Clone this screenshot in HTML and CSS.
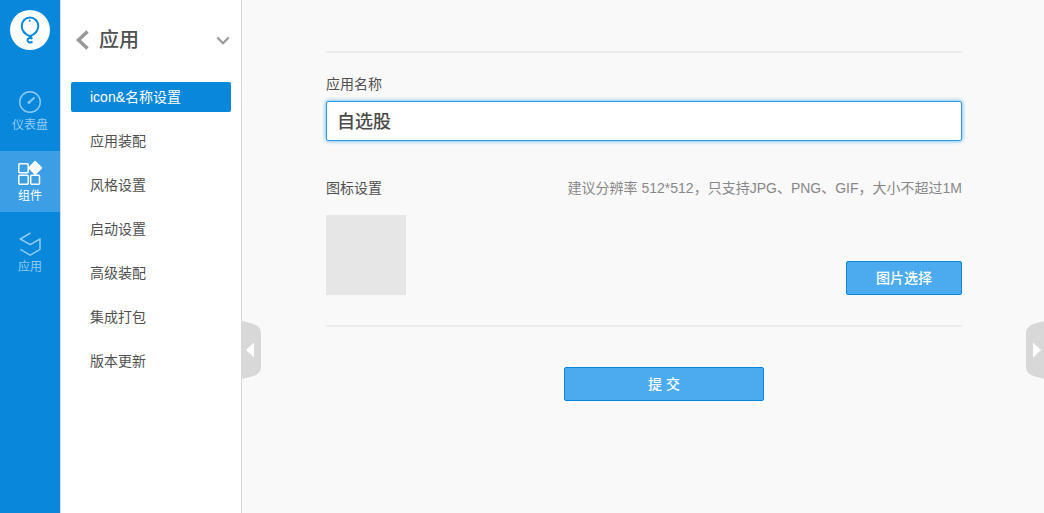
FILE: index.html
```html
<!DOCTYPE html>
<html lang="zh-CN">
<head>
<meta charset="utf-8">
<meta name="viewport" content="width=device-width, initial-scale=1">
<title>应用</title>
<link rel="stylesheet" href="styles.css">
</head>
<body>
<div class="app">
  <nav class="rail">
    <a class="logo" href="#" aria-label="首页">
      <svg width="40" height="40" viewBox="0 0 40 40" fill="none" stroke="#0988db" stroke-width="2" stroke-linecap="round">
        <path d="M20 26.3C15.500 24.500 11.700 20.600 11.700 15.800a8.300 8.300 0 0 1 16.600 0C28.300 20.600 24.500 24.500 20 26.300z"/>
        <path d="M20 26.300l1.600 1.500"/>
        <path d="M21.500 28.500c-1.600-1-4-.3-4 1.800s2.300 2.700 4.300 1.700"/>
        <circle cx="19.700" cy="10.700" r="1" fill="#0988db" stroke="none"/>
      </svg>
    </a>
    <div class="rail-items">
      <a class="rail-item" href="#">
        <svg width="28" height="28" viewBox="0 0 28 28" fill="none" stroke="currentColor">
          <circle cx="14" cy="14" r="10.300" stroke-width="1.400"/>
          <path d="M18 10l-5 4.400" stroke-width="2" stroke-linecap="round"/>
          <circle cx="13" cy="14.500" r="1.400" fill="currentColor" stroke="none"/>
        </svg>
        <span>仪表盘</span>
      </a>
      <a class="rail-item active" href="#" aria-current="page">
        <svg width="28" height="28" viewBox="0 0 28 28" fill="none" stroke="currentColor" stroke-width="1.500">
          <rect x="2.800" y="4.800" width="9.400" height="9" rx="1"/>
          <rect x="2.800" y="16.300" width="9.400" height="9" rx="1"/>
          <rect x="14.700" y="16.300" width="8.800" height="9" rx="1"/>
          <path d="M19.200 2.600l6.200 6.300-6.200 6.200L13 8.900z" fill="currentColor" stroke-linejoin="round"/>
        </svg>
        <span>组件</span>
      </a>
      <a class="rail-item" href="#">
        <svg width="28" height="28" viewBox="0 0 28 28" fill="none" stroke="currentColor" stroke-width="1.500" stroke-linejoin="round">
          <path d="M14.500 3L4.300 9l9.900 5.700L24 9v10.300l-9.800 5.900L4.300 19.300"/>
        </svg>
        <span>应用</span>
      </a>
    </div>
  </nav>

  <aside class="sidebar">
    <header class="sidebar-head">
      <button class="icon-button" type="button" aria-label="返回">
        <svg width="14" height="20" viewBox="0 0 14 20" fill="none" stroke="#999" stroke-width="3.500"><path d="M12.500 1.500L3.500 10l9 8.500"/></svg>
      </button>
      <h1 class="title">应用</h1>
      <button class="icon-button" type="button" aria-label="展开">
        <svg width="14" height="10" viewBox="0 0 14 10" fill="none" stroke="#999" stroke-width="2.200"><path d="M1.300 2.500L7 8.200l5.700-5.700"/></svg>
      </button>
    </header>
    <nav class="menu">
      <a class="menu-item active" href="#">icon&amp;名称设置</a>
      <a class="menu-item" href="#">应用装配</a>
      <a class="menu-item" href="#">风格设置</a>
      <a class="menu-item" href="#">启动设置</a>
      <a class="menu-item" href="#">高级装配</a>
      <a class="menu-item" href="#">集成打包</a>
      <a class="menu-item" href="#">版本更新</a>
    </nav>
  </aside>

  <main class="main">
    <form class="form">
      <div class="panel">
        <label class="label" for="app-name">应用名称</label>
        <input class="text-input" id="app-name" type="text" value="自选股">
        <div class="row">
          <span class="label">图标设置</span>
          <span class="hint">建议分辨率 512*512，只支持JPG、PNG、GIF，大小不超过1M</span>
        </div>
        <div class="row row-end">
          <div class="preview"></div>
          <button class="button" type="button">图片选择</button>
        </div>
      </div>
      <button class="button submit" type="submit">提 交</button>
    </form>
    <button class="handle handle-left" type="button" aria-label="收起左侧">
      <svg width="19" height="58" viewBox="0 0 19 58"><path d="M0 0l10 2.500Q19 5 19 12v34q0 7-9 9.500L0 58z" fill="#d8d8d8"/><path d="M12 21.500v15L4 29z" fill="#fff"/></svg>
    </button>
    <button class="handle handle-right" type="button" aria-label="展开右侧">
      <svg width="18" height="58" viewBox="0 0 18 58"><path d="M18 0L9 2.500Q0 5 0 12v34q0 7 9 9.500l9 2.500z" fill="#d8d8d8"/><path d="M7 21.500v15l8-7.500z" fill="#fff"/></svg>
    </button>
  </main>
</div>
</body>
</html>
```
FILE: styles.css
```css
* {
  box-sizing: border-box;
}

body {
  margin: 0;
  font-family: "Liberation Sans", "Noto Sans CJK SC", sans-serif;
  font-size: 14px;
  line-height: 20px;
  color: #505050;
  background: #f9f9f9;
}

a {
  color: inherit;
  text-decoration: none;
}

button,
input {
  font: inherit;
}

.app {
  display: flex;
  min-height: 100vh;
}

.rail {
  flex: 0 0 60px;
  padding-top: 10px;
  background: #0988db;
}

.logo {
  display: block;
  width: 40px;
  height: 40px;
  margin: 0 auto 30px;
  border-radius: 50%;
  background: #fff;
}

.logo svg,
.icon-button svg,
.handle svg {
  display: block;
}

.rail-items {
  display: flex;
  flex-direction: column;
  gap: 10px;
}

.rail-item {
  display: flex;
  flex-direction: column;
  align-items: center;
  gap: 1px;
  padding: 8px 0;
  font-size: 12px;
  line-height: 16px;
  color: #8fcaf2;
}

.rail-item.active {
  color: #fff;
  background: #3c9fe5;
}

.sidebar {
  flex: 0 0 182px;
  border: solid #d8d8d8;
  border-width: 0 1px;
  background: #fff;
}

.sidebar-head {
  display: flex;
  align-items: center;
  padding: 26px 11px 28px 14px;
}

.title {
  flex: 1;
  margin: 0 0 0 10px;
  font-size: 20px;
  line-height: 28px;
  font-weight: 500;
}

.icon-button {
  padding: 0;
  border: 0;
  background: none;
}

.menu {
  display: flex;
  flex-direction: column;
  gap: 14px;
  padding: 0 10px;
}

.menu-item {
  padding: 5px 19px;
  border-radius: 2px;
}

.menu-item.active {
  color: #fff;
  background: #0988db;
}

.main {
  position: relative;
  flex: 1;
  min-width: 0;
  padding: 51px 82px 40px 84px;
}

.form {
  display: flex;
  flex-direction: column;
  align-items: center;
  gap: 40px;
}

.panel {
  align-self: stretch;
  padding: 21px 0 30px;
  border: solid #ebebeb;
  border-width: 2px 0;
}

.label {
  display: block;
}

.text-input {
  display: block;
  width: 100%;
  height: 40px;
  margin: 7px 0 37px;
  padding: 0 10px 2px;
  border: 1px solid #2f9ae6;
  border-radius: 2px;
  outline: 0;
  font-size: 18px;
  font-weight: 500;
  color: #4a4a4a;
  background: #fff;
  box-shadow: 0 0 4px #4cabee;
}

.row {
  display: flex;
  justify-content: space-between;
}

.row-end {
  align-items: flex-end;
  margin-top: 17px;
}

.hint {
  color: #888;
}

.preview {
  width: 80px;
  height: 80px;
  background: #e6e6e6;
}

.button {
  width: 116px;
  height: 34px;
  padding: 0;
  border: 1px solid #0988db;
  border-radius: 2px;
  font-weight: 500;
  color: #fff;
  background: #4cabee;
}

.submit {
  width: 200px;
  margin-left: 40px;
}

.handle {
  position: absolute;
  top: 321px;
  padding: 0;
  border: 0;
  background: none;
}

.handle-left {
  left: 0;
}

.handle-right {
  right: 0;
}
```
